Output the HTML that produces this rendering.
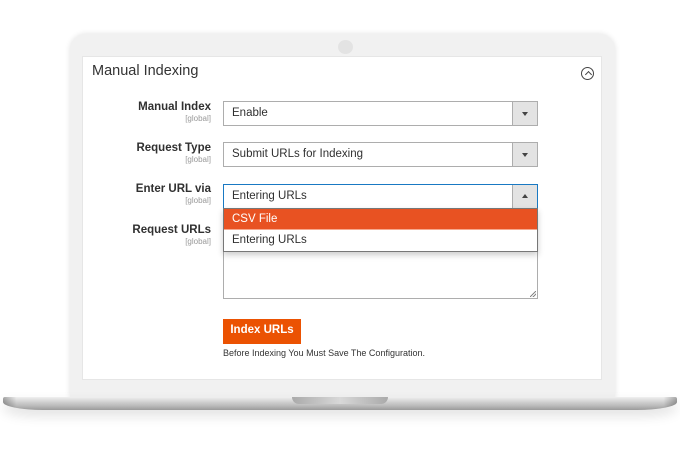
<!DOCTYPE html>
<html><head><style>
*{box-sizing:border-box;margin:0;padding:0}
body{width:680px;height:450px;background:#fff;position:relative;overflow:hidden;font-family:"Liberation Sans","DejaVu Sans",sans-serif;color:#303030}
.bezel{position:absolute;left:70px;top:34px;width:545px;height:364px;background:#f1f1f1;border-radius:16px 16px 0 0;box-shadow:0 0 6px rgba(0,0,0,.12)}
.cam{position:absolute;left:338px;top:40px;width:15px;height:14px;border-radius:50%;background:#e3e3e3}
.screen{position:absolute;left:82px;top:56px;width:520px;height:324px;background:#fff;border:1px solid #e6e6e6}
.title{position:absolute;left:92px;top:63px;font-size:14.5px;color:#333}
.coll{position:absolute;left:581px;top:67px;width:13px;height:13px;border:1px solid #444;border-radius:50%}
.coll:after{content:"";position:absolute;left:3.5px;top:4px;width:4px;height:4px;border-left:1px solid #444;border-top:1px solid #444;transform:rotate(45deg)}
.lab{position:absolute;right:469px;text-align:right;font-size:11.5px;font-weight:bold;color:#303030}
.lab small{display:block;font-weight:normal;font-size:8px;color:#999;margin-top:1px}
.sel{position:absolute;left:223px;width:315px;height:25px;border:1px solid #adadad;background:#fff;font-size:11.5px;padding:5px 0 0 8px}
.sel .ar{position:absolute;right:0;top:0;width:25px;height:23px;background:#e3e3e3;border-left:1px solid #adadad}
.sel .ar:after{content:"";position:absolute;left:9px;top:10px;border-left:3.5px solid transparent;border-right:3.5px solid transparent;border-top:4px solid #444}
.sel.up{border-color:#1979c3}
.sel.up .ar:after{border-top:0;border-bottom:4px solid #444;top:9px}
.dd{position:absolute;left:223px;top:208px;width:315px;height:44px;border:1px solid #777;background:#fff;box-shadow:0 3px 6px rgba(0,0,0,.2);font-size:11.5px}
.dd div{height:21px;padding:4px 0 0 8px}
.dd .hl{background:#e85222;color:#fff;border-bottom:1px solid #f6a88e}
.ta{position:absolute;left:223px;top:240px;width:315px;height:59px;border:1px solid #adadad}
.ta:after{content:"";position:absolute;right:1px;bottom:1px;width:6px;height:6px;background:linear-gradient(135deg,transparent 45%,#888 45%,#888 55%,transparent 55%,transparent 70%,#888 70%,#888 80%,transparent 80%)}
.btn{position:absolute;left:223px;top:319px;width:78px;height:25px;background:#eb5202;color:#fff;font-size:11.5px;font-weight:bold;text-align:center;padding-top:5px}
.note{position:absolute;left:223px;top:348px;font-size:9px;color:#333}
.base{position:absolute;left:3px;top:397px;width:674px;height:13px;background:linear-gradient(#f0f0f0,#cfcfcf 40%,#b8b8b8 70%,#9a9a9a);border-radius:2px 2px 40px 40px/2px 2px 8px 8px;box-shadow:0 6px 12px rgba(0,0,0,.12)}
.base:before{content:"";position:absolute;inset:0;border-radius:inherit;background:linear-gradient(90deg,rgba(0,0,0,.3),transparent 2%,transparent 98%,rgba(0,0,0,.3))}
.notch{position:absolute;left:292px;top:397px;width:96px;height:7px;background:linear-gradient(90deg,#aaa,#d8d8d8,#aaa);border-radius:0 0 8px 8px}
</style></head><body>
<div class="bezel"></div><div class="cam"></div>
<div class="screen"></div>
<div class="title">Manual Indexing</div>
<div class="coll"></div>
<div class="lab" style="top:101px">Manual Index<small>[global]</small></div>
<div class="lab" style="top:142px">Request Type<small>[global]</small></div>
<div class="lab" style="top:183px">Enter URL via<small>[global]</small></div>
<div class="lab" style="top:224px">Request URLs<small>[global]</small></div>
<div class="sel" style="top:101px">Enable<span class="ar"></span></div>
<div class="sel" style="top:142px">Submit URLs for Indexing<span class="ar"></span></div>
<div class="ta"></div>
<div class="sel up" style="top:184px">Entering URLs<span class="ar"></span></div>
<div class="dd"><div class="hl">CSV File</div><div>Entering URLs</div></div>
<div class="btn">Index URLs</div>
<div class="note">Before Indexing You Must Save The Configuration.</div>
<div class="base"></div><div class="notch"></div>
</body></html>
